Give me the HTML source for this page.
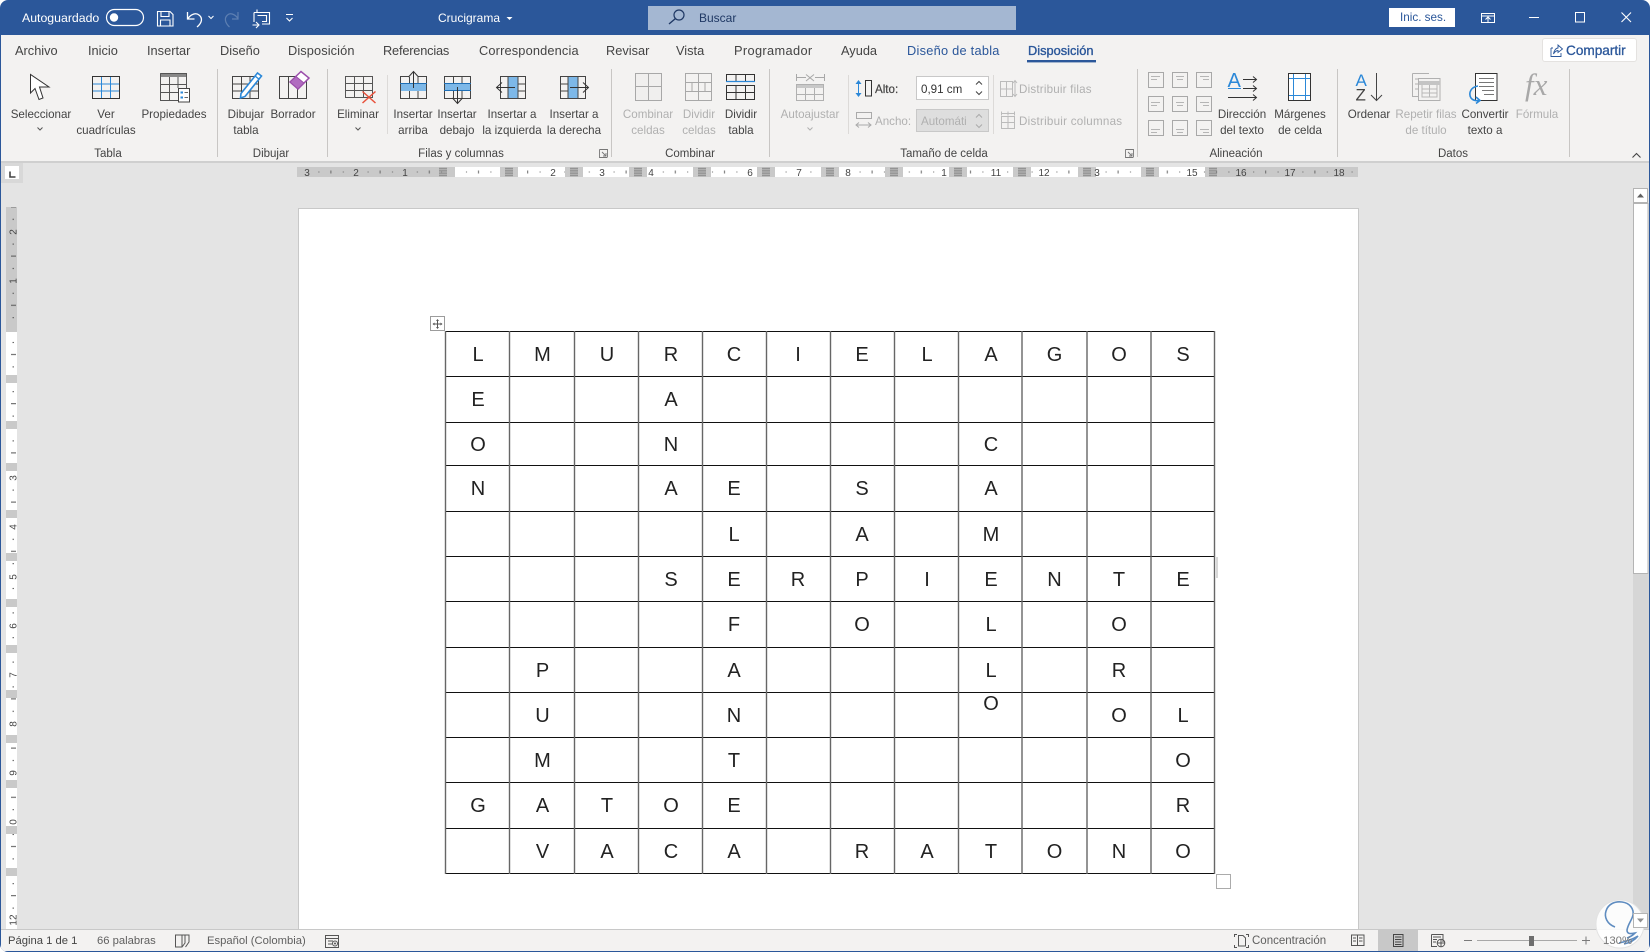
<!DOCTYPE html>
<html lang="es"><head><meta charset="utf-8"><title>Crucigrama - Word</title>
<style>
html,body{margin:0;padding:0;width:1650px;height:952px;overflow:hidden;background:#fff}
body{font-family:"Liberation Sans",sans-serif;position:relative}
#win{position:absolute;left:0;top:0;width:1650px;height:952px;background:#2b579a;border-radius:8px;overflow:hidden}
.bx{position:absolute}
.a{position:absolute;white-space:nowrap;line-height:16px;font-size:11.6px;color:#444}
.c{transform:translateX(-50%)}
.tab{font-size:12.8px;top:42.5px;color:#444}
.w{color:#fff;font-size:12.3px}
.d{color:#b0b0b0}
.g{font-size:11.5px;top:146px;color:#444}
.s{font-size:11.25px;top:933px;color:#5f5f5f}
svg{position:absolute;left:0;top:0}
svg text{font-family:"Liberation Sans",sans-serif}
table{position:absolute;left:446px;top:332px;width:770px;height:541px;border-collapse:collapse;table-layout:fixed}
td{padding:0;text-align:center;vertical-align:middle;font-size:20px;color:#222;line-height:20px}
</style></head><body><div id="win">
<div class="bx" style="left:1px;top:35px;width:1648px;height:126px;background:#f3f2f1"></div>
<div class="bx" style="left:1px;top:161px;width:1648px;height:3px;background:#cfcfcf"></div>
<div class="bx" style="left:1px;top:163px;width:1648px;height:766px;background:#e4e4e4"></div>
<div class="bx" style="left:299px;top:209px;width:1059px;height:720px;background:#fff;box-shadow:0 0 0 1px #c8c8c8"></div>
<div class="bx" style="left:1px;top:929px;width:1648px;height:22px;background:#f3f2f1;border-top:1px solid #c8c8c8;box-sizing:border-box"></div>
<div class="bx" style="left:648px;top:6px;width:368px;height:24px;background:#a4b7d2"></div>
<div class="bx" style="left:1389px;top:8px;width:66px;height:19px;background:#fff"></div>
<div class="bx" style="left:1543px;top:39px;width:93px;height:22px;background:#fff;box-shadow:0 0 0 1px #e4e2e0;border-radius:2px"></div>
<div class="bx" style="left:917px;top:77px;width:71px;height:22px;background:#fff;box-shadow:0 0 0 1px #c8c8c8"></div>
<div class="bx" style="left:917px;top:110px;width:71px;height:21px;background:#dedede;box-shadow:0 0 0 1px #c8c8c8"></div>
<div class="bx" style="left:1378px;top:930px;width:40px;height:21px;background:#c8c8c8"></div>

<svg width="1650" height="952" viewBox="0 0 1650 952" fill="none">
<defs>
<pattern id="rh" patternUnits="userSpaceOnUse" x="454" y="167" width="49.2" height="10">
<rect x="12" y="4.5" width="1" height="1" fill="#666"/><rect x="24" y="3.5" width="1" height="3" fill="#666"/><rect x="36.4" y="4.5" width="1" height="1" fill="#666"/>
</pattern>
<pattern id="rv" patternUnits="userSpaceOnUse" x="6" y="330" width="11" height="49.2">
<rect x="6.5" y="12" width="1.5" height="1" fill="#555"/><rect x="5" y="24" width="5" height="1" fill="#555"/><rect x="6.5" y="36.4" width="1.5" height="1" fill="#555"/>
</pattern>
<g id="hh" stroke="#8a8a8a" stroke-width=".8"><path d="M-4 -3.5H4M-4 -1.2H4M-4 1.2H4M-4 3.5H4M-3 -4.5V4.5M-1 -4.5V4.5M1 -4.5V4.5M3 -4.5V4.5"/></g>
<g id="al" stroke="#a8a8a8"><rect x=".5" y=".5" width="15" height="15" fill="#f3f2f1"/></g>
</defs>

<!-- title bar icons -->
<rect x="106.5" y="9.5" width="37" height="16" rx="8" stroke="#fff" stroke-width="1.2"/>
<circle cx="114" cy="17.5" r="4.2" fill="#fff"/>
<path d="M157.5 11.5H170L173 14.5V26H157.5Z M161 11.5V16.5H169V11.5M160.5 26V20H170V26" stroke="#fff" stroke-width="1.1"/>
<path d="M187.5 12V19H194.5M188 18.5C191 14 196 12.5 199 15C203 18 202 23 197 27" stroke="#fff" stroke-width="1.3"/>
<path d="M208.5 16L211 18.5L213.5 16" stroke="#fff"/>
<path d="M238 12V19H232M238 18.5C235 14 230 12.5 227.5 15C224 18 225 23 229.5 27" stroke="#5d7fb2" stroke-width="1.2"/>
<path d="M254 12.5H269.5V24H262M257 12.5V9.5M257.5 15.5H266.5V21.5H262M254 12.5V22M252.5 25H258M256 22L259 25L256 28" stroke="#fff" stroke-width="1.1"/>
<path d="M286 14.5H293M286.5 18L289.5 21L292.5 18" stroke="#fff" stroke-width="1.1"/>
<path d="M506.5 17L509.5 20L512.5 17Z" fill="#fff"/>
<circle cx="679" cy="15" r="5" stroke="#1f3864" stroke-width="1.2"/><path d="M675.5 18.5L669 24" stroke="#1f3864" stroke-width="1.4"/>
<path d="M1481.5 13.5H1494.5V22.5H1481.5ZM1481.5 16H1494.5M1488 22V17.5M1485.5 19.5L1488 17L1490.5 19.5" stroke="#fff"/>
<path d="M1529 17.5H1539" stroke="#fff"/><rect x="1575.5" y="12.5" width="9" height="9.5" stroke="#fff"/>
<path d="M1621.5 12.5L1631 22M1631 12.5L1621.5 22" stroke="#fff" stroke-width="1.1"/>

<!-- tab underline, share -->
<rect x="1027" y="60" width="69" height="2.4" fill="#2b579a"/>
<path d="M1551 48H1553M1551 48V56.5H1561V53M1553.5 54C1554 50.5 1556 48 1558 48V45L1562.5 49L1558 52.5V50.5C1556.5 50.5 1554.5 52 1553.5 54Z" stroke="#2b579a" stroke-width=".9"/>

<!-- group separators -->
<path d="M217.5 69V157M327.5 69V157M611.5 69V157M769.5 69V157M1137.5 69V157M1337.5 69V157M1569.5 69V157" stroke="#c8c6c4"/>
<path d="M387.5 75V134M848.5 75V134M993.5 75V134" stroke="#dcdad8"/>

<!-- Seleccionar -->
<path d="M30.5 74.5V93L35 88.5L39 99.5L43 98L39.5 87H49Z" fill="#fff" stroke="#333"/>
<path d="M37.5 127.5L40 130L42.5 127.5" stroke="#555"/>
<!-- Ver cuadriculas -->
<path d="M92.5 76.5H119.5V98.5H92.5Z" stroke="#333"/><path d="M101.5 77V98M110.5 77V98M93 84H119M93 91H119" stroke="#2b88d8"/>
<!-- Propiedades -->
<rect x="160" y="73" width="26" height="4" fill="#888"/>
<path d="M160.5 73.5H186.5V88M178 100.5H160.5V73.5M169.5 77V100M178 77V88M161 84.5H186M161 92.5H178" stroke="#555"/>
<rect x="178.5" y="88.5" width="11" height="13.5" fill="#fff" stroke="#444"/>
<path d="M180.5 92.5H183M180.5 97.5H183" stroke="#2b88d8" stroke-width="2"/><path d="M184.5 92.5H188M184.5 97.5H188" stroke="#666"/>
<!-- Dibujar tabla -->
<path d="M232.5 76.5H258.5V98.5H232.5ZM241.5 77V98M250 77V98M233 84H258M233 91H258" stroke="#444"/>
<path d="M241 93.5L257.5 73L261.5 76L245 96.5L240.5 98Z" fill="#fff" stroke="#2b88d8" stroke-width="1.6"/><path d="M255 76L259.5 79.5" stroke="#2b88d8" stroke-width="1.4"/>
<!-- Borrador -->
<path d="M279.5 76.5H306.5V98.5H279.5ZM288.5 77V98M297.5 77V98" stroke="#444"/>
<path d="M290 82L301 71.5L309 78L298 89Z" fill="#fff" stroke="#9b4dab" stroke-width="1.5"/><path d="M290 82L296 76.5L304 83L298 89Z" fill="#b06cc0" stroke="#9b4dab"/>
<!-- Eliminar -->
<path d="M345.5 76.5H372.5V97.5H345.5ZM354.5 77V97M363.5 77V97M346 83.5H372M346 90.5H372" stroke="#555"/>
<path d="M362.5 91.5L375.5 103M375.5 91.5L362.5 103" stroke="#e8503a" stroke-width="1.5"/>
<path d="M355.5 127.5L358 130L360.5 127.5" stroke="#555"/>
<!-- Insertar arriba -->
<rect x="400" y="83" width="27" height="8" fill="#7db8e8"/>
<path d="M400.5 76.5H426.5V98.5H400.5ZM409.5 91V98M418 91V98M409.5 77V83M418 77V83" stroke="#444"/><path d="M400 83.5H427" stroke="#1f6fb5"/>
<path d="M413.5 88V72M408.5 77L413.5 71.5L418.5 77" stroke="#333" fill="#f3f2f1"/>
<!-- Insertar debajo -->
<rect x="444" y="83" width="27" height="8" fill="#7db8e8"/>
<path d="M444.5 76.5H470.5V98.5H444.5ZM453.5 91V98M462 91V98M453.5 77V83M462 77V83" stroke="#444"/><path d="M444 83.5H471M444 90.5H471" stroke="#1f6fb5"/>
<path d="M457.5 87V103M452.5 98L457.5 103.5L462.5 98" stroke="#333"/>
<!-- Izquierda -->
<rect x="508" y="76" width="10" height="22" fill="#7db8e8"/>
<path d="M500.5 76.5H525.5V98.5H500.5ZM508 77V98M518 77V98M518 84H525M518 91H525" stroke="#444"/>
<path d="M515 87.5H497M502 82.5L496.5 87.5L502 92.5" stroke="#333"/>
<!-- Derecha -->
<rect x="568" y="76" width="10" height="22" fill="#7db8e8"/>
<path d="M560.5 76.5H585.5V98.5H560.5ZM568 77V98M578 77V98M561 84H568M561 91H568" stroke="#444"/>
<path d="M570 87.5H588M583 82.5L588.5 87.5L583 92.5" stroke="#333"/>
<!-- launcher -->
<path d="M599.5 149.5H607.5V157.5M599.5 149.5V157.5H607M602 152L606 156M606 153V156H603" stroke="#777" stroke-width=".9"/>
<path d="M1125.5 149.5H1133.5V157.5M1125.5 149.5V157.5H1133M1128 152L1132 156M1132 153V156H1129" stroke="#777" stroke-width=".9"/>
<!-- Combinar celdas -->
<path d="M635.5 73.5H661.5V100.5H635.5ZM636 86.5H661M648.5 74V86M648.5 87V100" stroke="#a8a8a8" fill="#f0efee"/>
<!-- Dividir celdas -->
<path d="M685.5 73.5H711.5V100.5H685.5ZM686 82.5H711M686 91.5H711M698.5 74V100M692 83V91M705 83V91" stroke="#a8a8a8"/>
<!-- Dividir tabla -->
<path d="M726.5 81V74.5H754.5V81M736 75V81M745.5 75V81" stroke="#333"/>
<path d="M726 81.5H755" stroke="#2b88d8" stroke-width="1.2"/>
<path d="M726.5 85.5H754.5V99.5H726.5ZM736 86V99M745.5 86V99M727 92.5H754" stroke="#333"/>
<!-- Autoajustar -->
<path d="M796.5 74V81M824.5 74V81M797 77.5H806M815 77.5H824M806 74.5L814 81M814 74.5L806 81" stroke="#a8a8a8"/>
<rect x="796" y="84" width="28" height="4" fill="#c8c8c8"/>
<path d="M796.5 84.5H823.5V100.5H796.5ZM805.5 88V100M814.5 88V100M797 94.5H823" stroke="#b0b0b0"/>
<path d="M807.5 127.5L810 130L812.5 127.5" stroke="#b0b0b0"/>
<!-- Alto / Ancho -->
<path d="M858.5 82V95" stroke="#2b88d8"/><path d="M855.5 84L858.5 80L861.5 84ZM855.5 93L858.5 97L861.5 93Z" fill="#2b88d8"/><rect x="865.5" y="80.5" width="6" height="15.5" stroke="#333"/>
<rect x="856.5" y="112.5" width="15" height="6" stroke="#aaa"/><path d="M856 125H871M859 122.5L856 125L859 127.5M868 122.5L871 125L868 127.5" stroke="#aaa"/>
<path d="M976 84.5L979 81.5L982 84.5M976 91.5L979 94.5L982 91.5" stroke="#444"/>
<path d="M976 117.5L979 114.5L982 117.5M976 124.5L979 127.5L982 124.5" stroke="#aaa"/>
<!-- Distribuir -->
<path d="M1000.5 81.5H1012.5V96.5H1000.5ZM1001 89H1012M1006.5 82V96M1015 81V96M1013 83L1015 80.5L1017 83M1013 94L1015 96.5L1017 94" stroke="#bbb"/>
<path d="M1001.5 116.5H1014.5V128.5H1001.5ZM1002 122.5H1014M1008 117V128M1001 113.5H1015M1001.5 111.5V115.5M1008 111.5V115.5M1014.5 111.5V115.5" stroke="#bbb"/>
<!-- align grid -->
<use href="#al" x="1148" y="72"/><use href="#al" x="1172" y="72"/><use href="#al" x="1196" y="72"/>
<use href="#al" x="1148" y="96"/><use href="#al" x="1172" y="96"/><use href="#al" x="1196" y="96"/>
<use href="#al" x="1148" y="120"/><use href="#al" x="1172" y="120"/><use href="#al" x="1196" y="120"/>
<path d="M1151 76.5H1160M1151 79.5H1157M1176 76.5H1184M1177 79.5H1183M1200 76.5H1209M1203 79.5H1209M1151 102.5H1160M1151 105.5H1157M1176 102.5H1184M1177 105.5H1183M1200 102.5H1209M1203 105.5H1209M1151 129.5H1160M1151 132.5H1157M1176 129.5H1184M1177 132.5H1183M1200 129.5H1209M1203 132.5H1209" stroke="#b5b5b5"/>
<!-- Direccion -->
<text x="1227.5" y="87" font-size="20" fill="#2b88d8">A</text><path d="M1228 88.5H1241" stroke="#2b88d8"/>
<path d="M1243 79.5H1256M1253 76.5L1256.5 79.5L1253 82.5M1228 97.5H1256M1253 94.5L1256.5 97.5L1253 100.5M1243 88.5H1256M1253 85.5L1256.5 88.5L1253 91.5" stroke="#333"/>
<!-- Margenes -->
<rect x="1288.5" y="73.5" width="22" height="27" stroke="#333" fill="#fff"/>
<path d="M1293.5 74V100M1305.5 74V100M1289 78.5H1310M1289 95.5H1310" stroke="#2b88d8"/>
<!-- Ordenar -->
<text x="1355.5" y="86" font-size="17" fill="#2b88d8">A</text><text x="1355.5" y="100.5" font-size="17" fill="#444">Z</text>
<path d="M1376.5 73V100M1371 95L1376.5 100.5L1382 95" stroke="#444"/>
<!-- Repetir -->
<path d="M1412.5 73.5H1429M1412.5 73.5V96.5H1418M1415 79H1418M1415 84H1418M1415 89H1418" stroke="#b0b0b0"/>
<rect x="1418.5" y="78.5" width="21.5" height="22" stroke="#b0b0b0" fill="#f3f2f1"/>
<rect x="1419" y="81" width="21" height="4" fill="#c4c4c4"/><path d="M1422 85V97H1437V85M1429.5 85V97M1422 89H1437M1422 93H1437" stroke="#b8b8b8"/>
<!-- Convertir -->
<rect x="1475.5" y="73.5" width="21.5" height="27" fill="#fff" stroke="#333"/>
<path d="M1479 78.5H1494M1479 82.5H1494M1479 86.5H1494M1482 90.5H1494M1484 94.5H1494" stroke="#777"/>
<path d="M1478 86C1471 87 1468 93 1471 98C1473 100.5 1476 101 1479 100.5M1476 97L1480 100.5L1476 103.5" stroke="#2b88d8" stroke-width="1.6"/>
<!-- fx -->
<text x="1525" y="95" font-size="31" fill="#a8a8a8" font-style="italic" style="font-family:'Liberation Serif',serif">fx</text>
<path d="M1632.5 157.5L1636.5 153.5L1640.5 157.5" stroke="#444" stroke-width="1.1"/>

<!-- horizontal ruler -->
<rect x="297" y="167" width="1061" height="10" fill="#c9c9c9"/>
<rect x="455" y="167" width="750" height="10" fill="#fff"/>
<rect x="297" y="167" width="1061" height="10" fill="url(#rh)"/>
<g fill="#c9c9c9"><rect x="500" y="167" width="18" height="10"/><rect x="565" y="167" width="18" height="10"/><rect x="629" y="167" width="18" height="10"/><rect x="693" y="167" width="18" height="10"/><rect x="757" y="167" width="18" height="10"/><rect x="821" y="167" width="18" height="10"/><rect x="885" y="167" width="18" height="10"/><rect x="949" y="167" width="18" height="10"/><rect x="1013" y="167" width="18" height="10"/><rect x="1078" y="167" width="18" height="10"/><rect x="1141" y="167" width="18" height="10"/></g>
<use href="#hh" x="443" y="172"/><use href="#hh" x="509" y="172"/><use href="#hh" x="574" y="172"/><use href="#hh" x="638" y="172"/><use href="#hh" x="702" y="172"/><use href="#hh" x="766" y="172"/><use href="#hh" x="830" y="172"/><use href="#hh" x="894" y="172"/><use href="#hh" x="958" y="172"/><use href="#hh" x="1022" y="172"/><use href="#hh" x="1087" y="172"/><use href="#hh" x="1150" y="172"/><use href="#hh" x="1213" y="172"/>
<g font-size="10" fill="#444" text-anchor="middle">
<text x="307" y="176">3</text><text x="356" y="176">2</text><text x="405" y="176">1</text><text x="553" y="176">2</text><text x="602" y="176">3</text><text x="651" y="176">4</text><text x="750" y="176">6</text><text x="799" y="176">7</text><text x="848" y="176">8</text><text x="944" y="176">1</text><text x="996" y="176">11</text><text x="1044" y="176">12</text><text x="1097" y="176">3</text><text x="1192" y="176">15</text><text x="1241" y="176">16</text><text x="1290" y="176">17</text><text x="1339" y="176">18</text>
</g>
<!-- tab selector -->
<rect x="1" y="163" width="22" height="20" fill="#d8d8d8"/><rect x="5" y="166" width="14" height="13" fill="#fff"/>
<path d="M10 171.5V177H15.5" stroke="#444" stroke-width="1.6"/>
<!-- vertical ruler -->
<rect x="6" y="207" width="11" height="722" fill="#fff"/>
<rect x="6" y="207" width="11" height="125" fill="#c9c9c9"/>
<rect x="6" y="207" width="11" height="722" fill="url(#rv)"/>
<g fill="#c9c9c9"><rect x="6" y="375" width="11" height="8"/><rect x="6" y="421" width="11" height="8"/><rect x="6" y="463" width="11" height="8"/><rect x="6" y="510" width="11" height="8"/><rect x="6" y="553" width="11" height="8"/><rect x="6" y="599" width="11" height="8"/><rect x="6" y="645" width="11" height="8"/><rect x="6" y="690" width="11" height="8"/><rect x="6" y="735" width="11" height="8"/><rect x="6" y="780" width="11" height="8"/><rect x="6" y="826" width="11" height="8"/><rect x="6" y="868" width="11" height="8"/></g>
<g font-size="10" fill="#444" text-anchor="middle">
<text transform="translate(16.5 232) rotate(-90)">2</text><text transform="translate(16.5 281) rotate(-90)">1</text><text transform="translate(16.5 478) rotate(-90)">3</text><text transform="translate(16.5 527) rotate(-90)">4</text><text transform="translate(16.5 577) rotate(-90)">5</text><text transform="translate(16.5 626) rotate(-90)">6</text><text transform="translate(16.5 675) rotate(-90)">7</text><text transform="translate(16.5 724) rotate(-90)">8</text><text transform="translate(16.5 773) rotate(-90)">9</text><text transform="translate(16.5 822) rotate(-90)">0</text><text transform="translate(16.5 920) rotate(-90)">12</text>
</g>

<!-- scrollbar -->
<rect x="1633" y="164" width="16" height="765" fill="#e4e4e4"/>
<rect x="1633.5" y="203.5" width="14.5" height="370" fill="#fff" stroke="#b4b4b4"/>
<rect x="1633" y="574" width="16" height="355" fill="#d6d6d6"/>
<rect x="1633.5" y="188.5" width="14" height="14" fill="#fff" stroke="#b4b4b4"/>
<path d="M1637 197.5L1640.5 193.5L1644 197.5Z" fill="#606060"/>

<!-- table chrome -->
<rect x="430.5" y="316.5" width="14" height="14" fill="#fff" stroke="#9c9c9c"/>
<path d="M437.5 319.5V328M433 324H442" stroke="#555"/><path d="M436 321L437.5 319L439 321ZM436 327L437.5 329L439 327ZM434.5 322.5L432.5 324L434.5 325.5ZM440.5 322.5L442.5 324L440.5 325.5Z" fill="#555"/>
<rect x="1216.5" y="874.5" width="14" height="14" fill="#fff" stroke="#ababab"/>
<rect x="1216" y="557" width="2" height="21" fill="#d8d8d8"/>
<!-- grid lines -->
<path d="M445 331.5H1215M445 376.5H1215M445 422.5H1215M445 465.5H1215M445 511.5H1215M445 556.5H1215M445 601.5H1215M445 647.5H1215M445 692.5H1215M445 737.5H1215M445 782.5H1215M445 828.5H1215M445 873.5H1215" stroke="#111"/>
<path d="M445.5 331V874M509.5 331V874M574.5 331V874M638.5 331V874M702.5 331V874M766.5 331V874M830.5 331V874M894.5 331V874M958.5 331V874M1022 331V874M1087 331V874M1151 331V874M1214.5 331V874" stroke="#666" stroke-width="1.4"/>

<!-- status icons -->
<path d="M175.5 935V947H182L185 943V935ZM182 935V947M185.5 935H189V942L185.5 947" stroke="#555"/>
<path d="M325.5 935.5H338.5V947.5H325.5ZM326 938.5H338M328 941H333M328 944H332" stroke="#555"/><circle cx="335" cy="943.5" r="2.5" stroke="#555"/><circle cx="335" cy="943.5" r="1" fill="#555"/>
<path d="M1234.5 937V934.5H1237M1246 934.5H1248.5V937M1248.5 945V947.5H1246M1237 947.5H1234.5V945" stroke="#555"/><path d="M1238.5 935.5H1243L1245.5 938V946H1238.5Z" stroke="#555"/>
<path d="M1351.5 935H1357.5V945.5H1351.5ZM1357.5 935H1364V945.5H1357.5ZM1353 938H1356M1353 941H1356M1359 938H1362.5M1359 941H1362.5" stroke="#555"/>
<rect x="1393.5" y="934.5" width="9.5" height="12" stroke="#444"/><path d="M1395 937H1401.5M1395 939.5H1401.5M1395 942H1401.5M1395 944.5H1401.5" stroke="#444"/>
<path d="M1431.5 934.5H1443V942M1431.5 934.5V946.5H1437M1433 937H1441M1433 939.5H1437M1433 942H1436" stroke="#555"/><circle cx="1441" cy="943" r="3.8" stroke="#555"/><path d="M1437.5 943H1444.5M1441 939.5V946.5" stroke="#555"/>
<path d="M1464 940.5H1472M1582 940.5H1590M1586 936.5V944.5" stroke="#7a7a7a"/><path d="M1477 940.5H1577" stroke="#a8a8a8"/>
<rect x="1529" y="936" width="5" height="10" fill="#6e6e6e"/>

<!-- watermark -->
<circle cx="1620" cy="924" r="24" fill="#fff" fill-opacity=".88" stroke="#e2e2e2"/>
<path d="M1615 927C1607 924 1604 917 1606 911C1608 904 1615 901 1622 902C1630 903 1634 909 1633 915C1632 920 1628 924 1627 930C1627 934 1630 934 1635 933C1632 936 1630 937 1627 938M1619 943C1625 942 1633 939 1638 936C1634 941 1629 943 1624 944" stroke="#5f8cc0" stroke-width="1.6"/>
<rect x="1633.5" y="913.5" width="14" height="14" fill="#fff" stroke="#b4b4b4"/>
<path d="M1637 918.5L1640.5 922.5L1644 918.5Z" fill="#909090"/>
</svg>

<!-- title text -->
<div class="a w" style="left:22px;top:10px">Autoguardado</div>
<div class="a w" style="left:438px;top:10px;font-size:12px">Crucigrama</div>
<div class="a" style="left:699px;top:10px;font-size:12px;color:#1f3864">Buscar</div>
<div class="a" style="left:1400px;top:10px;font-size:11.7px;color:#2b579a">Inic. ses.</div>

<!-- tabs -->
<div class="a tab" style="left:15px">Archivo</div>
<div class="a tab" style="left:88px">Inicio</div>
<div class="a tab" style="left:147px">Insertar</div>
<div class="a tab" style="left:220px">Diseño</div>
<div class="a tab" style="left:288px;letter-spacing:.1px">Disposición</div>
<div class="a tab" style="left:383px;letter-spacing:-.2px">Referencias</div>
<div class="a tab" style="left:479px;letter-spacing:.15px">Correspondencia</div>
<div class="a tab" style="left:606px">Revisar</div>
<div class="a tab" style="left:676px">Vista</div>
<div class="a tab" style="left:734px;letter-spacing:.35px">Programador</div>
<div class="a tab" style="left:841px">Ayuda</div>
<div class="a tab" style="left:907px;letter-spacing:.25px;color:#2b579a">Diseño de tabla</div>
<div class="a tab" style="left:1028px;color:#2b579a;-webkit-text-stroke:.35px #2b579a">Disposición</div>
<div class="a" style="left:1566px;top:42.5px;font-size:13.6px;color:#2b579a;-webkit-text-stroke:.3px #2b579a">Compartir</div>

<!-- ribbon labels -->
<div class="a c" style="left:41px;top:107px">Seleccionar</div>
<div class="a c" style="left:106px;top:107px">Ver</div><div class="a c" style="left:106px;top:123px">cuadrículas</div>
<div class="a c" style="left:174px;top:107px">Propiedades</div>
<div class="a c" style="left:246px;top:107px">Dibujar</div><div class="a c" style="left:246px;top:123px">tabla</div>
<div class="a c" style="left:293px;top:107px">Borrador</div>
<div class="a c" style="left:358px;top:107px">Eliminar</div>
<div class="a c" style="left:413px;top:107px">Insertar</div><div class="a c" style="left:413px;top:123px">arriba</div>
<div class="a c" style="left:457px;top:107px">Insertar</div><div class="a c" style="left:457px;top:123px">debajo</div>
<div class="a c" style="left:512px;top:107px">Insertar a</div><div class="a c" style="left:512px;top:123px">la izquierda</div>
<div class="a c" style="left:574px;top:107px">Insertar a</div><div class="a c" style="left:574px;top:123px">la derecha</div>
<div class="a c d" style="left:648px;top:107px">Combinar</div><div class="a c d" style="left:648px;top:123px">celdas</div>
<div class="a c d" style="left:699px;top:107px">Dividir</div><div class="a c d" style="left:699px;top:123px">celdas</div>
<div class="a c" style="left:741px;top:107px">Dividir</div><div class="a c" style="left:741px;top:123px">tabla</div>
<div class="a c d" style="left:810px;top:107px">Autoajustar</div>
<div class="a" style="left:875px;top:82px;-webkit-text-stroke:.2px #444">Alto:</div>
<div class="a" style="left:921px;top:82px;color:#333">0,91 cm</div>
<div class="a d" style="left:875px;top:114px">Ancho:</div>
<div class="a d" style="left:921px;top:114px">Automáti</div>
<div class="a d" style="left:1019px;top:82px;letter-spacing:.2px">Distribuir filas</div>
<div class="a d" style="left:1019px;top:114px;letter-spacing:.25px">Distribuir columnas</div>
<div class="a c" style="left:1242px;top:107px">Dirección</div><div class="a c" style="left:1242px;top:123px">del texto</div>
<div class="a c" style="left:1300px;top:107px">Márgenes</div><div class="a c" style="left:1300px;top:123px">de celda</div>
<div class="a c" style="left:1369px;top:107px">Ordenar</div>
<div class="a c d" style="left:1426px;top:107px">Repetir filas</div><div class="a c d" style="left:1426px;top:123px">de título</div>
<div class="a c" style="left:1485px;top:107px">Convertir</div><div class="a c" style="left:1485px;top:123px">texto a</div>
<div class="a c d" style="left:1537px;top:107px">Fórmula</div>

<div class="a c g" style="left:108px">Tabla</div>
<div class="a c g" style="left:271px">Dibujar</div>
<div class="a c g" style="left:461px">Filas y columnas</div>
<div class="a c g" style="left:690px">Combinar</div>
<div class="a c g" style="left:944px">Tamaño de celda</div>
<div class="a c g" style="left:1236px">Alineación</div>
<div class="a c g" style="left:1453px">Datos</div>

<!-- table -->
<table>
<colgroup><col style="width:64px"><col style="width:65px"><col style="width:64px"><col style="width:64px"><col style="width:62px"><col style="width:66px"><col style="width:62px"><col style="width:68px"><col style="width:60px"><col style="width:67px"><col style="width:62px"><col style="width:66px"></colgroup>
<tr style="height:45px"><td>L</td><td>M</td><td>U</td><td>R</td><td>C</td><td>I</td><td>E</td><td>L</td><td>A</td><td>G</td><td>O</td><td>S</td></tr>
<tr style="height:46px"><td>E</td><td></td><td></td><td>A</td><td></td><td></td><td></td><td></td><td></td><td></td><td></td><td></td></tr>
<tr style="height:43px"><td>O</td><td></td><td></td><td>N</td><td></td><td></td><td></td><td></td><td>C</td><td></td><td></td><td></td></tr>
<tr style="height:46px"><td>N</td><td></td><td></td><td>A</td><td>E</td><td></td><td>S</td><td></td><td>A</td><td></td><td></td><td></td></tr>
<tr style="height:45px"><td></td><td></td><td></td><td></td><td>L</td><td></td><td>A</td><td></td><td>M</td><td></td><td></td><td></td></tr>
<tr style="height:45px"><td></td><td></td><td></td><td>S</td><td>E</td><td>R</td><td>P</td><td>I</td><td>E</td><td>N</td><td>T</td><td>E</td></tr>
<tr style="height:46px"><td></td><td></td><td></td><td></td><td>F</td><td></td><td>O</td><td></td><td>L</td><td></td><td>O</td><td></td></tr>
<tr style="height:45px"><td></td><td>P</td><td></td><td></td><td>A</td><td></td><td></td><td></td><td>L</td><td></td><td>R</td><td></td></tr>
<tr style="height:45px"><td></td><td>U</td><td></td><td></td><td>N</td><td></td><td></td><td></td><td style="vertical-align:top;line-height:23px">O</td><td></td><td>O</td><td>L</td></tr>
<tr style="height:45px"><td></td><td>M</td><td></td><td></td><td>T</td><td></td><td></td><td></td><td></td><td></td><td></td><td>O</td></tr>
<tr style="height:46px"><td>G</td><td>A</td><td>T</td><td>O</td><td>E</td><td></td><td></td><td></td><td></td><td></td><td></td><td>R</td></tr>
<tr style="height:45px"><td></td><td>V</td><td>A</td><td>C</td><td>A</td><td></td><td>R</td><td>A</td><td>T</td><td>O</td><td>N</td><td>O</td></tr>
</table>

<!-- status -->
<div class="a s" style="left:8px;color:#444">Página 1 de 1</div>
<div class="a s" style="left:97px">66 palabras</div>
<div class="a s" style="left:207px">Español (Colombia)</div>
<div class="a s" style="left:1252px;font-size:11.5px">Concentración</div>
<div class="a s" style="left:1603px;font-size:11.4px;color:#777">130%</div>
</div></body></html>
